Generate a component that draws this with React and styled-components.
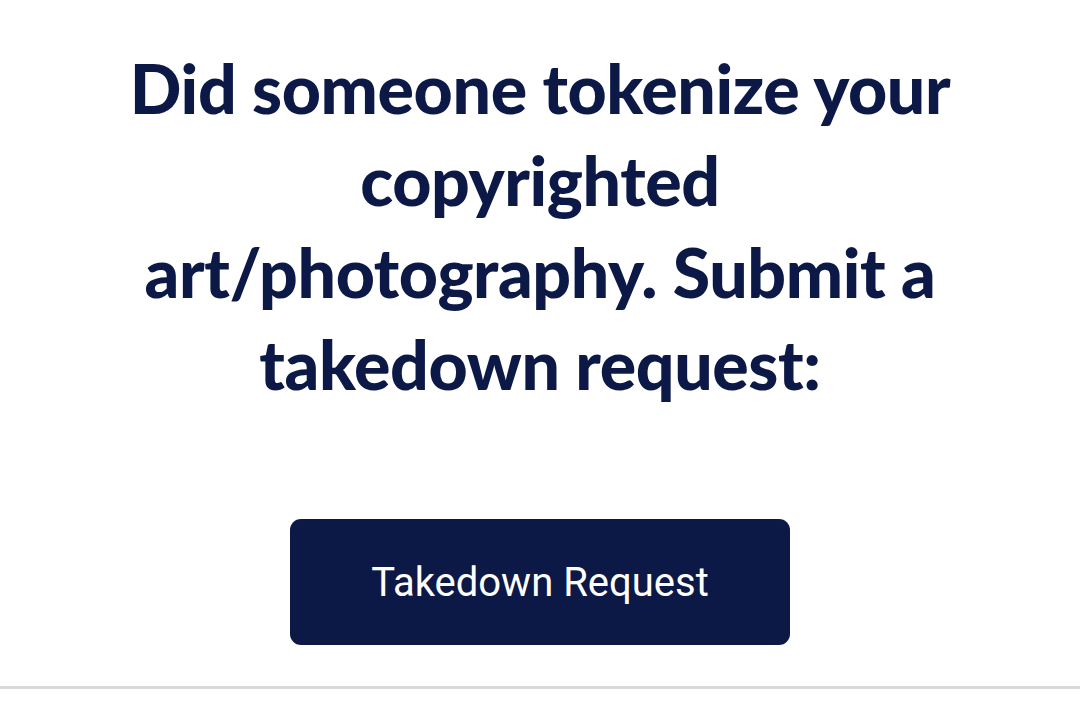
import React from "react";
import styled, { createGlobalStyle } from "styled-components";

const Global = createGlobalStyle`
  html, body { margin: 0; padding: 0; background: #ffffff; }
  body { width: 1080px; height: 703px; overflow: hidden; }
`;

const Page = styled.main`
  display: flex;
  flex-direction: column;
  align-items: center;
  padding-top: 42px;
`;

const Heading = styled.h1`
  margin: 0;
  font-family: "Lato", "Noto Sans", sans-serif;
  font-weight: 900;
  font-size: 68px;
  line-height: 92px;
  letter-spacing: -0.4px;
  color: #0c1846;
  text-align: center;
`;

const ActionButton = styled.button`
  margin-top: 109px;
  width: 500px;
  height: 126px;
  border: none;
  border-radius: 11px;
  background: #0c1846;
  color: #ffffff;
  font-family: "Roboto", "Noto Sans", sans-serif;
  font-size: 40px;
  font-weight: 400;
  cursor: pointer;
`;

const Divider = styled.hr`
  align-self: stretch;
  margin: 41px 0 0;
  border: none;
  height: 3px;
  background: #d9d9d9;
`;

export default function App() {
  return (
    <>
      <Global />
      <Page>
        <Heading>
          Did someone tokenize your
          <br />
          copyrighted
          <br />
          art/photography. Submit a
          <br />
          takedown request:
        </Heading>
        <ActionButton>Takedown Request</ActionButton>
        <Divider />
      </Page>
    </>
  );
}
